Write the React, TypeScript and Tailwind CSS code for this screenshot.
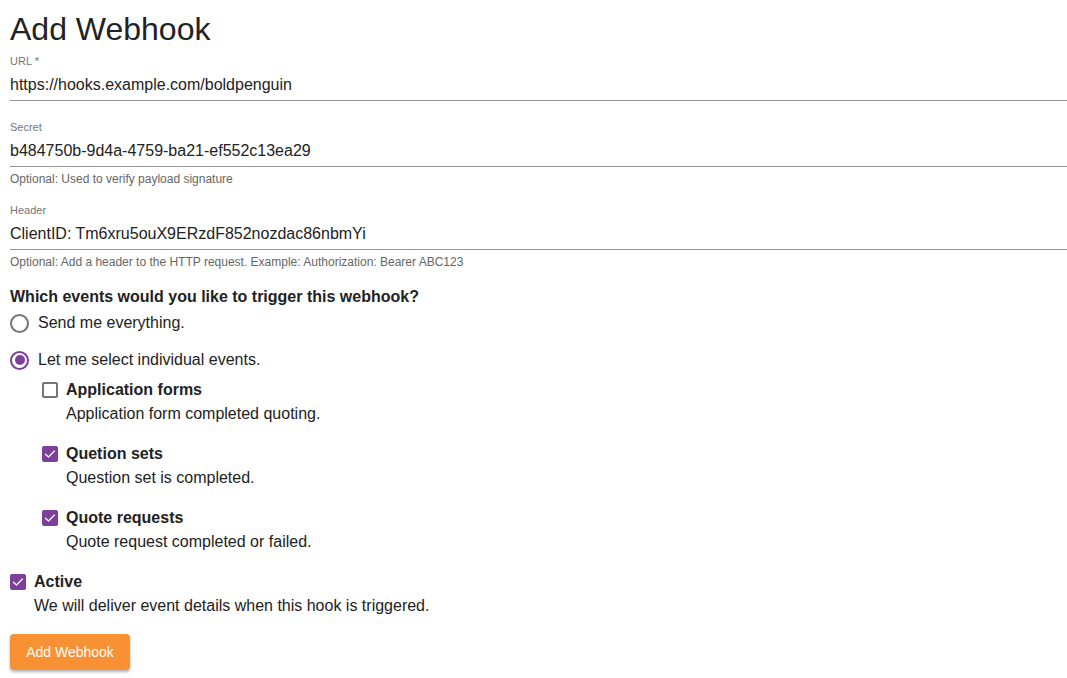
import type { ReactNode } from "react";

const font = { fontFamily: '"Liberation Sans", Arial, Helvetica, sans-serif' };

type FieldProps = {
  label: string;
  value: string;
  helper?: string;
  className?: string;
};

/** Underlined text field */
function Field({ label, value, helper, className }: FieldProps) {
  return (
    <div className={"flex flex-col " + (className ?? "")}>
      <label className="text-[11px] leading-[13px] text-[#757575]">{label}</label>
      <div className="border-b border-[#949494] pt-[7px] pb-[6px] text-[16px] leading-[19px] text-[#222]">
        {value}
      </div>
      {helper && <div className="mt-[5px] text-[12px] leading-[14px] text-[#666]">{helper}</div>}
    </div>
  );
}

function Radio({ checked, children }: { checked?: boolean; children: ReactNode }) {
  return (
    <div className="flex items-center gap-[9px] h-[24px]">
      <span
        className={
          checked
            ? "flex h-[19px] w-[19px] items-center justify-center rounded-full border-2 border-[#7d3f98]"
            : "flex h-[19px] w-[19px] items-center justify-center rounded-full border-2 border-[#757575]"
        }
      >
        {checked && <span className="h-[10px] w-[10px] rounded-full bg-[#7d3f98]" />}
      </span>
      <span className="text-[16px] text-[#222]">{children}</span>
    </div>
  );
}

function Check({ checked }: { checked?: boolean }) {
  if (!checked) {
    return <span className="block h-[16px] w-[16px] rounded-[2px] border-2 border-[#757575]" />;
  }
  return (
    <span className="flex h-[16px] w-[16px] items-center justify-center rounded-[2px] bg-[#7d3f98]">
      <svg viewBox="0 0 16 16" className="h-[16px] w-[16px]" fill="none">
        <path d="M3.5 8.2 L6.5 11 L12.5 5" stroke="white" strokeWidth="1.2" strokeLinecap="round" strokeLinejoin="round" />
      </svg>
    </span>
  );
}

type OptionProps = {
  checked?: boolean;
  title: string;
  desc: string;
};

function Option({ checked, title, desc }: OptionProps) {
  return (
    <div className="flex flex-col">
      <div className="flex items-center gap-[8px] h-[20px]">
        <Check checked={checked} />
        <span className="text-[16px] font-bold text-[#222]">{title}</span>
      </div>
      <div className="pl-[24px] pt-[4px] text-[16px] leading-[20px] text-[#222]">{desc}</div>
    </div>
  );
}

export default function App() {
  return (
    <div className="min-h-[678px] bg-white pl-[10px] pb-[8px]" style={font}>
      <h1 className="pt-[10px] text-[32px] leading-[38px] text-[#222]">Add Webhook</h1>

      <Field className="mt-[7px]" label="URL *" value="https://hooks.example.com/boldpenguin" />
      <Field
        className="mt-[20px]"
        label="Secret"
        value="b484750b-9d4a-4759-ba21-ef552c13ea29"
        helper="Optional: Used to verify payload signature"
      />
      <Field
        className="mt-[18px]"
        label="Header"
        value="ClientID: Tm6xru5ouX9ERzdF852nozdac86nbmYi"
        helper="Optional: Add a header to the HTTP request. Example: Authorization: Bearer ABC123"
      />

      {/* イベント選択 */}
      <div className="mt-[18px] text-[16px] font-bold leading-[20px] text-[#222]">
        Which events would you like to trigger this webhook?
      </div>
      <div className="mt-[4px] flex flex-col gap-[13px]">
        <Radio>Send me everything.</Radio>
        <Radio checked>Let me select individual events.</Radio>
      </div>

      <div className="mt-[8px] flex flex-col gap-[20px] pl-[32px]">
        <Option title="Application forms" desc="Application form completed quoting." />
        <Option checked title="Quetion sets" desc="Question set is completed." />
        <Option checked title="Quote requests" desc="Quote request completed or failed." />
      </div>

      <div className="mt-[20px]">
        <Option checked title="Active" desc="We will deliver event details when this hook is triggered." />
      </div>

      <button className="mt-[18px] h-[36px] w-[120px] rounded-[4px] bg-[#f89134] text-[14px] text-white shadow-[0_2px_3px_rgba(0,0,0,0.3)]">
        Add Webhook
      </button>
    </div>
  );
}
